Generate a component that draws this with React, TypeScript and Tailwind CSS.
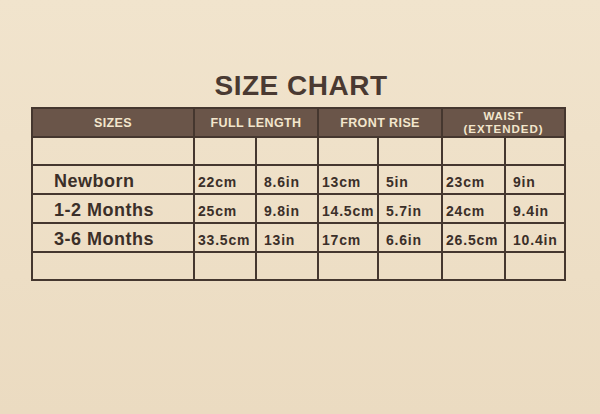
const rows = [
  { size: "Newborn", values: ["22cm", "8.6in", "13cm", "5in", "23cm", "9in"] },
  { size: "1-2 Months", values: ["25cm", "9.8in", "14.5cm", "5.7in", "24cm", "9.4in"] },
  { size: "3-6 Months", values: ["33.5cm", "13in", "17cm", "6.6in", "26.5cm", "10.4in"] },
];

const widths = ["w-[162px]", "w-[62px]", "w-[62px]", "w-[60px]", "w-[64px]", "w-[63px]", "w-[60px]"];

const cell = "border-2 border-[#45372f]";

export default function App() {
  return (
    <div className="w-[600px] h-[414px] bg-gradient-to-b from-[#f1e4cd] to-[#ebdbc1] flex flex-col font-['Liberation_Sans',sans-serif]">
      <h1 className="mt-[72px] self-center text-[28px] leading-[28px] font-bold tracking-[0.5px] text-[#4a3a32] pl-[2px]">
        SIZE CHART
      </h1>

      <table className="mt-[7px] ml-[31px] w-[534px] table-fixed border-collapse border-2 border-[#3d312b] text-[#3b2f29]">
        <colgroup>
          {widths.map((w, i) => (
            <col key={i} className={w} />
          ))}
        </colgroup>
        <thead>
          <tr className="h-[29px] bg-[#6a5549] text-[#f3e6cd] text-[12.5px] font-bold">
            <th className={`${cell} pt-[2px] tracking-[0.4px]`}>SIZES</th>
            <th className={`${cell} pt-[2px] tracking-[0.4px]`} colSpan={2}>
              FULL LENGTH
            </th>
            <th className={`${cell} pt-[2px] tracking-[0.4px]`} colSpan={2}>
              FRONT RISE
            </th>
            <th className={`${cell} p-0 text-[11.5px] leading-[13px]`} colSpan={2}>
              <div className="tracking-[0.7px]">WAIST</div>
              <div className="tracking-[1px]">(EXTENDED)</div>
            </th>
          </tr>
        </thead>
        <tbody>
          <tr className="h-[28px]">
            {widths.map((_, i) => (
              <td key={i} className={cell} />
            ))}
          </tr>
          {rows.map((row) => (
            <tr key={row.size} className="h-[29px]">
              <td className={`${cell} pl-[21px] pt-[3px] text-[18px] leading-[20px] font-bold tracking-[0.5px]`}>
                {row.size}
              </td>
              {row.values.map((v, i) => (
                <td
                  key={i}
                  className={`${cell} ${i % 2 === 0 ? "pl-[3px]" : "pl-[7px]"} pt-[6px] text-[14px] leading-[15px] font-bold tracking-[0.8px] whitespace-nowrap`}
                >
                  {v}
                </td>
              ))}
            </tr>
          ))}
          <tr className="h-[28px]">
            {widths.map((_, i) => (
              <td key={i} className={cell} />
            ))}
          </tr>
        </tbody>
      </table>
    </div>
  );
}
